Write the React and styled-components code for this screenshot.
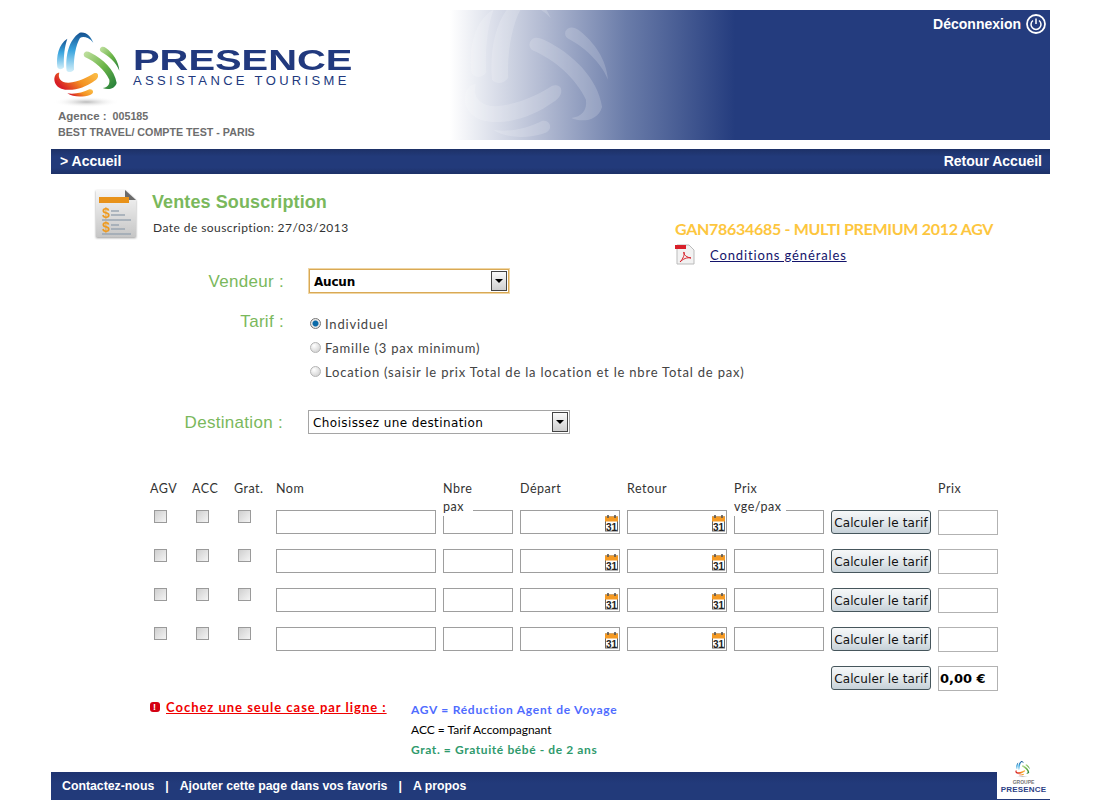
import styled, { createGlobalStyle } from 'styled-components';

const GOTHIC = `"Lato", "Open Sans", "Liberation Sans", sans-serif`;
const ARIAL = `"Liberation Sans", Arial, sans-serif`;
const GREEN = '#7ab85c';
const NAVY = '#243c7e';

const Global = createGlobalStyle`
  html, body { margin: 0; padding: 0; background: #fff; }
  body { font-family: ${GOTHIC}; color: #333; }
  * { box-sizing: border-box; }
`;

const Page = styled.div`
  width: 999px;
  margin-left: 51px;
  padding-top: 10px;
  height: 800px;
  overflow: hidden;
`;

const Header = styled.header`
  position: relative;
  height: 130px;
  overflow: hidden;
  background: linear-gradient(90deg, #fff 399px, #b4bcd3 490px, #6a7ca9 575px, ${NAVY} 684px);
`;

const Watermark = styled.svg`
  position: absolute;
  left: 400px;
  top: -24px;
  width: 198px;
  height: 176px;
  fill: #fff;
  opacity: 0.17;
`;

const Brand = styled.div`
  display: flex;
  height: 91px;
  padding: 18px 0 0 0;
`;

const LogoMark = styled.svg`
  width: 90px;
  height: 80px;
  flex: none;
  margin-left: -3px;
`;

const Wordmark = styled.div`
  margin: 20px 0 0 -5px;
  color: #21397e;
  font-family: ${ARIAL};
`;

const WordTop = styled.div`
  font-size: 29px;
  line-height: 24px;
  font-weight: 700;
  width: 160px;
  white-space: nowrap;
  transform: scaleX(1.375);
  transform-origin: left center;
`;

const WordSub = styled.div`
  margin-top: 2px;
  font-size: 13px;
  line-height: 13px;
  white-space: nowrap;
  letter-spacing: 3.35px;
`;

const Agency = styled.div`
  padding: 7px 0 0 7px;
  font-family: ${ARIAL};
  font-size: 10.7px;
  font-weight: 700;
  color: #6d6d6d;
  line-height: 16px;
`;

const AgencyLabel = styled.span`
  font-size: 11.5px;
  margin-right: 3px;
`;

const Logout = styled.a`
  position: absolute;
  top: 4px;
  right: 4px;
  display: flex;
  align-items: center;
  gap: 5px;
  font-family: ${ARIAL};
  font-size: 14px;
  font-weight: 700;
  color: #fff;
`;

const Bar = styled.nav`
  display: flex;
  justify-content: space-between;
  align-items: center;
  height: 25px;
  margin-top: 9px;
  padding: 0 8px 2px 9px;
  background: linear-gradient(180deg, #1d3167, #223a7a 30%, #223a7a 75%, #1d3167);
  font-family: ${ARIAL};
  font-size: 14px;
  font-weight: 700;
  color: #fff;
`;

const Intro = styled.section`
  display: flex;
  height: 95px;
  padding: 14px 0 0 44px;
`;

const DocIcon = styled.svg`
  width: 42px;
  height: 52px;
  flex: none;
  filter: drop-shadow(0 1px 1px #999);
`;

const IntroText = styled.div`
  margin-left: 15px;
  padding-top: 4px;
`;

const Title = styled.h1`
  margin: 0;
  font-family: ${ARIAL};
  font-size: 18px;
  line-height: 21px;
  font-weight: 700;
  letter-spacing: 0.1px;
  color: ${GREEN};
`;

const DateLine = styled.div`
  margin: 7px 0 0 1px;
  font-size: 12px;
  line-height: 16px;
  letter-spacing: 0.44px;
  color: #333;
`;

const Product = styled.div`
  margin-left: auto;
  width: 375px;
  padding-top: 31px;
`;

const ProductName = styled.div`
  font-size: 16px;
  line-height: 20px;
  font-weight: 700;
  letter-spacing: -0.3px;
  color: #fdc63e;
  white-space: nowrap;
`;

const DocLink = styled.a`
  display: flex;
  align-items: center;
  gap: 15px;
  margin-top: 5px;
  font-size: 13px;
  letter-spacing: 0.87px;
  line-height: 20px;
  color: #14146b;
`;

const DocLinkText = styled.span`
  text-decoration: underline;
`;

const FieldRow = styled.div`
  display: grid;
  grid-template-columns: 233px 1fr;
  column-gap: ${(p) => p.$gap}px;
  margin-top: ${(p) => p.$top}px;
`;

const FieldLabel = styled.label`
  height: 24px;
  font-family: ${ARIAL};
  font-size: 17px;
  line-height: ${(p) => p.$line}px;
  letter-spacing: 0.3px;
  color: ${GREEN};
  text-align: right;
  padding-right: ${(p) => p.$inset || 0}px;
`;

const SelectBox = styled.div`
  display: flex;
  align-items: center;
  justify-content: space-between;
  width: ${(p) => p.$width}px;
  height: 24px;
  padding: 0 1px 0 4px;
  border: 1px solid ${(p) => (p.$focus ? '#d9a955' : '#a5a5a5')};
  box-shadow: ${(p) => (p.$focus ? '0 0 0 1px #f0d6a4' : 'none')};
  font-family: "DejaVu Sans", sans-serif;
  font-size: 12px;
  font-weight: ${(p) => (p.$focus ? 700 : 400)};
  letter-spacing: ${(p) => (p.$focus ? '-0.2px' : '0.4px')};
  color: #000;
`;

const SelectValue = styled.span`
  padding-top: 1px;
`;

const SelectArrow = styled.span`
  display: flex;
  align-items: center;
  justify-content: center;
  width: 16px;
  height: 20px;
  border: 1px solid #444;
  background: linear-gradient(180deg, #fafafa, #cfcfcf);
  &::after {
    content: '';
    border: 4px solid transparent;
    border-top: 4px solid #000;
    border-bottom: 0;
  }
`;

const RadioList = styled.div`
  display: flex;
  flex-direction: column;
`;

const RadioLine = styled.label`
  display: flex;
  align-items: center;
  height: 24px;
  margin-left: 1px;
  font-size: 13px;
  letter-spacing: 0.8px;
  color: #444;
  white-space: nowrap;
`;

const Radio = styled.input.attrs({ type: 'radio', name: 'tarif' })`
  appearance: none;
  width: 11px;
  height: 11px;
  margin: -2px 4px 0 0;
  border-radius: 50%;
  border: 1px solid #b4b4b4;
  background: radial-gradient(circle at 35% 30%, #fff, #c9c9c9);
  &:checked {
    border-color: #777;
    background: radial-gradient(circle, #0a6aa8 0 2.5px, #e8e8e8 3.5px);
  }
`;

const Table = styled.div`
  margin: 46px 0 0 99px;
`;

const Grid = styled.div`
  display: grid;
  grid-template-columns: 35px 35px 35px 160px 70px 100px 100px 90px 100px 60px;
  column-gap: 7px;
  align-items: start;
  height: ${(p) => p.$height}px;
`;

const ColHead = styled.div`
  position: relative;
  width: ${(p) => p.$wrap || 'auto'};
  font-size: 12.5px;
  line-height: 18px;
  letter-spacing: 0.5px;
  color: #333;
  white-space: nowrap;
  z-index: 1;
`;

const HeadLine = styled.span`
  display: block;
  background: #fff;
`;

const Check = styled.input.attrs({ type: 'checkbox' })`
  appearance: none;
  width: 13px;
  height: 13px;
  margin: 0 0 0 4px;
  border: 1px solid #9a9a9a;
  background: linear-gradient(135deg, #cfcfcf, #f4f4f4);
`;

const TextBox = styled.input.attrs({ type: 'text' })`
  display: block;
  width: 100%;
  height: 24px;
  margin: 0;
  border: 1px solid #9e9e9e;
  background: #fff;
  padding: 0 3px;
`;

const PriceBox = styled(TextBox)`
  height: 25px;
  padding: 0 1px;
  border-color: #b2b2b2;
  font-family: "DejaVu Sans", sans-serif;
  font-size: 13px;
  font-weight: 700;
  color: #000;
`;

const DateCell = styled.div`
  position: relative;
`;

const CalendarIcon = styled.svg`
  position: absolute;
  right: 1px;
  top: 4px;
  width: 15px;
  height: 18px;
`;

const Calc = styled.button`
  display: block;
  width: 100%;
  height: 24px;
  padding: 2px 0 0;
  border: 1px solid #46565c;
  border-radius: 3px;
  background: linear-gradient(180deg, #f5f7f8, #e6ebee 45%, #c6d1d8);
  font-family: "DejaVu Sans", sans-serif;
  font-size: 12px;
  letter-spacing: 0.1px;
  color: #111;
  white-space: nowrap;
`;

const Legend = styled.div`
  display: flex;
  margin: -8px 0 0 99px;
  height: 75px;
`;

const Warning = styled.div`
  display: flex;
  align-items: center;
  gap: 6px;
  align-self: flex-start;
  width: 261px;
  height: 20px;
  font-size: 13px;
  font-weight: 700;
  letter-spacing: 0.98px;
  color: #f00000;
  white-space: nowrap;
`;

const WarnBadge = styled.span`
  display: flex;
  align-items: center;
  justify-content: center;
  width: 10px;
  height: 10px;
  border-radius: 3px;
  background: #d40012;
  color: #fff;
  font-family: ${ARIAL};
  font-size: 9px;
  line-height: 10px;
  font-weight: 700;
`;

const WarnText = styled.span`
  text-decoration: underline;
`;

const LegendList = styled.div`
  padding-top: 3px;
`;

const LegendLine = styled.div`
  height: 20px;
  font-size: 12px;
  line-height: 20px;
  font-weight: ${(p) => p.$weight || 700};
  letter-spacing: ${(p) => p.$spacing}px;
  color: ${(p) => p.$color};
  white-space: nowrap;
`;

const Footer = styled.footer`
  position: relative;
  display: flex;
  align-items: center;
  gap: 11px;
  height: 28px;
  padding-left: 11px;
  background: linear-gradient(180deg, #1e3370, #223a7a 40%, #223a7a);
  font-family: ${ARIAL};
  font-size: 12.3px;
  font-weight: 700;
  color: #fff;
`;

const GroupBadge = styled.div`
  position: absolute;
  right: 0;
  bottom: 1px;
  width: 53px;
  height: 42px;
  background: #fff;
  display: flex;
  flex-direction: column;
  align-items: center;
  font-family: ${ARIAL};
  color: #2c3f86;
`;

const GroupMark = styled.svg`
  width: 20px;
  height: 18px;
  margin-top: 3px;
`;

const GroupSmall = styled.div`
  font-size: 5px;
  line-height: 8px;
  color: #777;
`;

const GroupName = styled.div`
  font-size: 8px;
  line-height: 8px;
  font-weight: 700;
  letter-spacing: 0.2px;
`;

const SWIRL = {
  blueA: 'M28 118C24 85 32 48 58 32C50 55 46 85 48 118C42 126 32 126 28 118Z',
  blueB: 'M56 128C52 85 62 35 95 14C115 10 128 25 136 44C122 28 106 24 96 30C84 50 76 90 78 125C72 134 60 134 56 128Z',
  greenA: 'M108 76C112 68 120 70 128 74C165 92 200 125 206 165C200 185 178 186 164 180C178 178 186 170 184 155C170 125 140 100 112 88C107 85 106 80 108 76Z',
  greenB: 'M156 62C160 54 168 56 174 60C195 76 212 100 214 128C205 104 180 82 160 72C156 69 155 66 156 62Z',
  orangeA: 'M150 140C152 148 146 154 140 158C110 180 70 192 40 182C24 176 16 160 20 146C24 135 30 134 34 134C28 150 40 165 62 164C90 162 120 148 138 136C144 134 149 136 150 140Z',
  orangeB: 'M135 190C136 196 132 199 126 201C105 208 75 208 58 196C78 200 105 194 124 184C130 183 134 186 135 190Z',
};

function SwirlPaths({ id }) {
  return (
    <>
      <defs>
        <linearGradient id={`${id}b`} x1="0" y1="1" x2="0" y2="0">
          <stop offset="0" stopColor="#d4f0fa" />
          <stop offset="0.55" stopColor="#3aa5de" />
          <stop offset="1" stopColor="#14508f" />
        </linearGradient>
        <linearGradient id={`${id}g`} x1="0" y1="0" x2="1" y2="1">
          <stop offset="0" stopColor="#c5e2a5" />
          <stop offset="0.5" stopColor="#6db648" />
          <stop offset="1" stopColor="#1f7a3a" />
        </linearGradient>
        <linearGradient id={`${id}o`} x1="1" y1="0" x2="0" y2="0.4">
          <stop offset="0" stopColor="#fcc24a" />
          <stop offset="0.55" stopColor="#f39021" />
          <stop offset="1" stopColor="#d81f26" />
        </linearGradient>
        <radialGradient id={`${id}s`}>
          <stop offset="0" stopColor="#bbb" />
          <stop offset="1" stopColor="#fff" stopOpacity="0" />
        </radialGradient>
      </defs>
      <ellipse cx="115" cy="222" rx="100" ry="16" fill={`url(#${id}s)`} />
      <path d={SWIRL.blueA} fill={`url(#${id}b)`} />
      <path d={SWIRL.blueB} fill={`url(#${id}b)`} />
      <path d={SWIRL.greenA} fill={`url(#${id}g)`} />
      <path d={SWIRL.greenB} fill={`url(#${id}g)`} />
      <path d={SWIRL.orangeA} fill={`url(#${id}o)`} />
      <path d={SWIRL.orangeB} fill={`url(#${id}o)`} />
    </>
  );
}

function Calendar() {
  return (
    <CalendarIcon viewBox="0 0 15 18">
      <rect x="1.5" y="3" width="12" height="14" fill="#fff" stroke="#666" />
      <rect x="1" y="2.5" width="13" height="5" fill="#f59a23" />
      <path d="M4 1v3M11 1v3" stroke="#555" strokeWidth="1.6" />
      <text x="2" y="16.5" fontFamily="Liberation Sans, sans-serif" fontSize="10" fontWeight="700" fill="#222">31</text>
    </CalendarIcon>
  );
}

function TariffRow() {
  return (
    <Grid $height={39}>
      <Check />
      <Check />
      <Check />
      <TextBox />
      <TextBox />
      <DateCell><TextBox /><Calendar /></DateCell>
      <DateCell><TextBox /><Calendar /></DateCell>
      <TextBox />
      <Calc type="button">Calculer le tarif</Calc>
      <PriceBox />
    </Grid>
  );
}

export default function App() {
  return (
    <Page>
      <Global />
      <Header>
        <Watermark viewBox="0 0 270 240">
          {Object.values(SWIRL).map((d) => <path key={d} d={d} />)}
        </Watermark>
        <Brand>
          <LogoMark viewBox="0 0 270 240"><SwirlPaths id="main" /></LogoMark>
          <Wordmark>
            <WordTop>PRESENCE</WordTop>
            <WordSub>ASSISTANCE TOURISME</WordSub>
          </Wordmark>
        </Brand>
        <Agency>
          <div><AgencyLabel>Agence :</AgencyLabel> 005185</div>
          <div>BEST TRAVEL/ COMPTE TEST - PARIS</div>
        </Agency>
        <Logout>
          Déconnexion
          <svg width="20" height="20" viewBox="0 0 20 20" fill="none" stroke="#fff">
            <circle cx="10" cy="10" r="9" strokeWidth="1.8" />
            <path d="M7 6.5a5 5 0 1 0 6 0M10 4.5v5.5" strokeWidth="1.5" />
          </svg>
        </Logout>
      </Header>

      <Bar>
        <span>&gt; Accueil</span>
        <span>Retour Accueil</span>
      </Bar>

      <Intro>
        <DocIcon viewBox="0 0 42 52">
          <defs>
            <linearGradient id="sheet" x1="0" y1="0" x2="0" y2="1">
              <stop offset="0" stopColor="#f6f6f6" />
              <stop offset="1" stopColor="#c6c6c6" />
            </linearGradient>
          </defs>
          <path d="M1 2H30L41 12V49H1Z" fill="url(#sheet)" />
          <path d="M30 2L41 12H30Z" fill="#6a6a6a" />
          <rect x="4" y="9" width="30" height="6" fill="#e8921a" />
          <path d="M16 23h8M16 27h14M7 32h29M16 37h8M16 41h14M7 46h29" stroke="#9aa7b3" strokeWidth="1.6" />
          <text x="7" y="30" fontFamily="Liberation Sans, sans-serif" fontSize="14" fontWeight="700" fill="#ee9a1f">$</text>
          <text x="7" y="44" fontFamily="Liberation Sans, sans-serif" fontSize="14" fontWeight="700" fill="#ee9a1f">$</text>
        </DocIcon>
        <IntroText>
          <Title>Ventes Souscription</Title>
          <DateLine>Date de souscription: 27/03/2013</DateLine>
        </IntroText>
        <Product>
          <ProductName>GAN78634685 - MULTI PREMIUM 2012 AGV</ProductName>
          <DocLink>
            <svg width="20" height="21" viewBox="0 0 20 21">
              <path d="M2 1H14L19 6V20H2Z" fill="#f2f2f2" stroke="#bbb" />
              <rect x="0" y="1" width="11" height="4" fill="#d8202a" />
              <path d="M5 18C8 15 10 10 9 8C8 8 9 13 16 14C12 13 8 15 5 18Z" fill="none" stroke="#d8202a" />
            </svg>
            <DocLinkText>Conditions générales</DocLinkText>
          </DocLink>
        </Product>
      </Intro>

      <FieldRow $gap={25} $top={0}>
        <FieldLabel $line={26}>Vendeur :</FieldLabel>
        <SelectBox $width={200} $focus>
          <SelectValue>Aucun</SelectValue>
          <SelectArrow />
        </SelectBox>
      </FieldRow>

      <FieldRow $gap={25} $top={19}>
        <FieldLabel $line={20}>Tarif :</FieldLabel>
        <RadioList>
          <RadioLine><Radio defaultChecked />Individuel</RadioLine>
          <RadioLine><Radio />Famille (3 pax minimum)</RadioLine>
          <RadioLine><Radio />Location (saisir le prix Total de la location et le nbre Total de pax)</RadioLine>
        </RadioList>
      </FieldRow>

      <FieldRow $gap={24} $top={26}>
        <FieldLabel $inset={1} $line={25}>Destination :</FieldLabel>
        <SelectBox $width={262}>
          <SelectValue>Choisissez une destination</SelectValue>
          <SelectArrow />
        </SelectBox>
      </FieldRow>

      <Table>
        <Grid $height={30}>
          <ColHead>AGV</ColHead>
          <ColHead>ACC</ColHead>
          <ColHead>Grat.</ColHead>
          <ColHead>Nom</ColHead>
          <ColHead $wrap="30px"><HeadLine>Nbre</HeadLine><HeadLine>pax</HeadLine></ColHead>
          <ColHead>Départ</ColHead>
          <ColHead>Retour</ColHead>
          <ColHead $wrap="52px"><HeadLine>Prix</HeadLine><HeadLine>vge/pax</HeadLine></ColHead>
          <span />
          <ColHead>Prix</ColHead>
        </Grid>
        <TariffRow />
        <TariffRow />
        <TariffRow />
        <TariffRow />
        <Grid $height={39}>
          <span /><span /><span /><span /><span /><span /><span /><span />
          <Calc type="button">Calculer le tarif</Calc>
          <PriceBox defaultValue="0,00 €" />
        </Grid>
      </Table>

      <Legend>
        <Warning>
          <WarnBadge>!</WarnBadge>
          <WarnText>Cochez une seule case par ligne :</WarnText>
        </Warning>
        <LegendList>
          <LegendLine $color="#4f6cff" $spacing={0.73}>AGV = Réduction Agent de Voyage</LegendLine>
          <LegendLine $color="#000" $weight={400} $spacing={0}>ACC = Tarif Accompagnant</LegendLine>
          <LegendLine $color="#2f9a6d" $spacing={0.6}>Grat. = Gratuité bébé - de 2 ans</LegendLine>
        </LegendList>
      </Legend>

      <Footer>
        <span>Contactez-nous</span>
        <span>|</span>
        <span>Ajouter cette page dans vos favoris</span>
        <span>|</span>
        <span>A propos</span>
        <GroupBadge>
          <GroupMark viewBox="0 0 270 240"><SwirlPaths id="small" /></GroupMark>
          <GroupSmall>GROUPE</GroupSmall>
          <GroupName>PRESENCE</GroupName>
        </GroupBadge>
      </Footer>
    </Page>
  );
}
